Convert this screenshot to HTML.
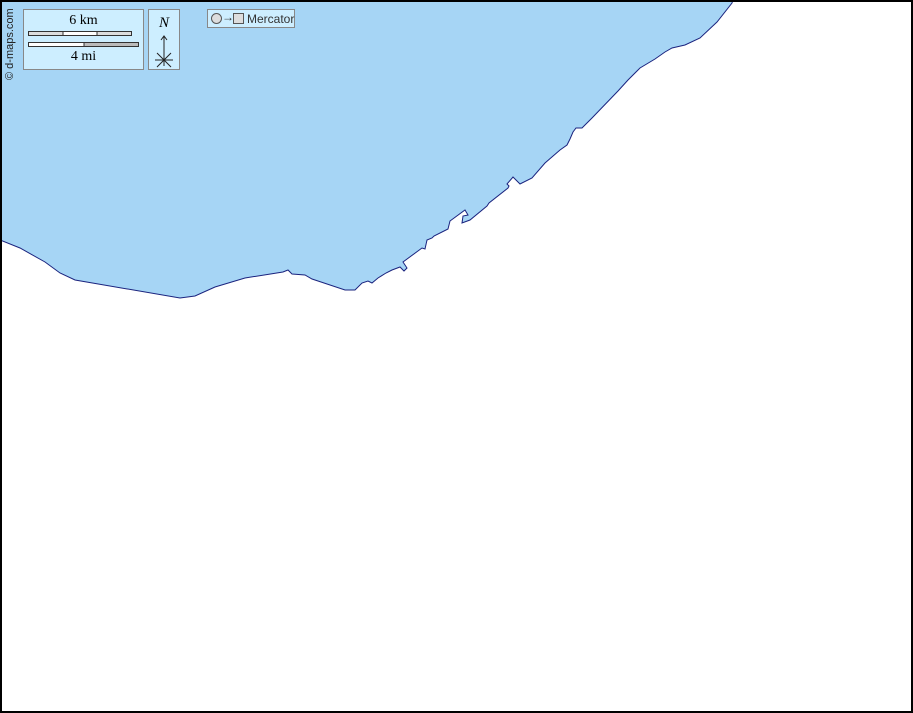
<!DOCTYPE html>
<html><head><style>
html,body{margin:0;padding:0;background:#fff}
body{width:913px;height:713px;position:relative;overflow:hidden;font-family:"Liberation Sans",sans-serif}
.frame{position:absolute;left:0;top:0;width:909px;height:709px;border:2px solid #000}
.box{position:absolute;background:#cdeeff;border:1px solid #888;box-sizing:border-box}
</style></head><body>
<svg width="913" height="713" style="position:absolute;left:0;top:0">
<path d="M0,0 L733,0 L732,3 L717,22 L700,38 L685,45 L672,48 L665,52 L655,59 L640,68 L628,80 L618,91 L592,118 L582,128 L576,128 L573,132 L570,139 L567,145 L560,150 L545,163 L532,178 L520,184 L513,177 L507,184 L509,186 L508,188 L489,203 L487,206 L470,220 L462,223 L463,216 L468,215 L465,210 L450,221 L448,229 L434,236 L432,238 L427,240 L425,249 L422,248 L403,262 L407,268 L404,271 L400,267 L392,270 L386,273 L378,278 L372,283 L368,281 L362,283 L355,290 L345,290 L312,279 L305,275 L292,274 L288,270 L283,272 L245,278 L215,287 L195,296 L180,298 L75,280 L60,273 L45,262 L20,248 L0,240 Z" fill="#a6d5f5" stroke="#1a237e" stroke-width="1"/>
</svg>
<div class="frame"></div>
<div style="position:absolute;left:3px;top:80px;width:14px;height:0;">
<div style="position:absolute;left:0;top:0;transform:rotate(-90deg);transform-origin:0 0;font-size:11px;white-space:nowrap;color:#222;line-height:14px">© d-maps.com</div></div>
<div class="box" style="left:23px;top:9px;width:121px;height:61px">
<div style="position:absolute;left:0;width:119px;top:3px;text-align:center;font:14px 'Liberation Serif',serif">6 km</div>
<div style="position:absolute;left:4px;top:21px;width:102px;height:3px;border:1px solid #333;background:linear-gradient(90deg,#ddd 0 33%,#333 33% 34%,#fff 34% 66%,#333 66% 67%,#ddd 67%)"></div>
<div style="position:absolute;left:4px;top:32px;width:109px;height:3px;border:1px solid #333;background:linear-gradient(90deg,#fff 0 50%,#333 50% 51%,#bbb 51%)"></div>
<div style="position:absolute;left:0;width:119px;top:39px;text-align:center;font:14px 'Liberation Serif',serif">4 mi</div>
</div>
<div class="box" style="left:148px;top:9px;width:32px;height:61px">
<div style="position:absolute;left:0;width:30px;top:5px;text-align:center;font:italic 15px 'Liberation Serif',serif">N</div>
<svg width="30" height="40" style="position:absolute;left:0;top:22px"><path d="M15,4 V34 M12,8 L15,4 L18,8 M8,21 L22,35 M22,21 L8,35 M6,28 H24" stroke="#222" fill="none" stroke-width="1"/></svg>
</div>
<div class="box" style="left:207px;top:9px;width:88px;height:19px;font-size:12px;color:#333">
<span style="position:absolute;left:3px;top:3px;width:9px;height:9px;border:1px solid #555;border-radius:50%;background:#ddd"></span>
<span style="position:absolute;left:14px;top:0px;font-size:12px">→</span>
<span style="position:absolute;left:25px;top:3px;width:9px;height:9px;border:1px solid #555;background:#ddd"></span>
<span style="position:absolute;left:39px;top:2px">Mercator</span>
</div>
</body></html>
